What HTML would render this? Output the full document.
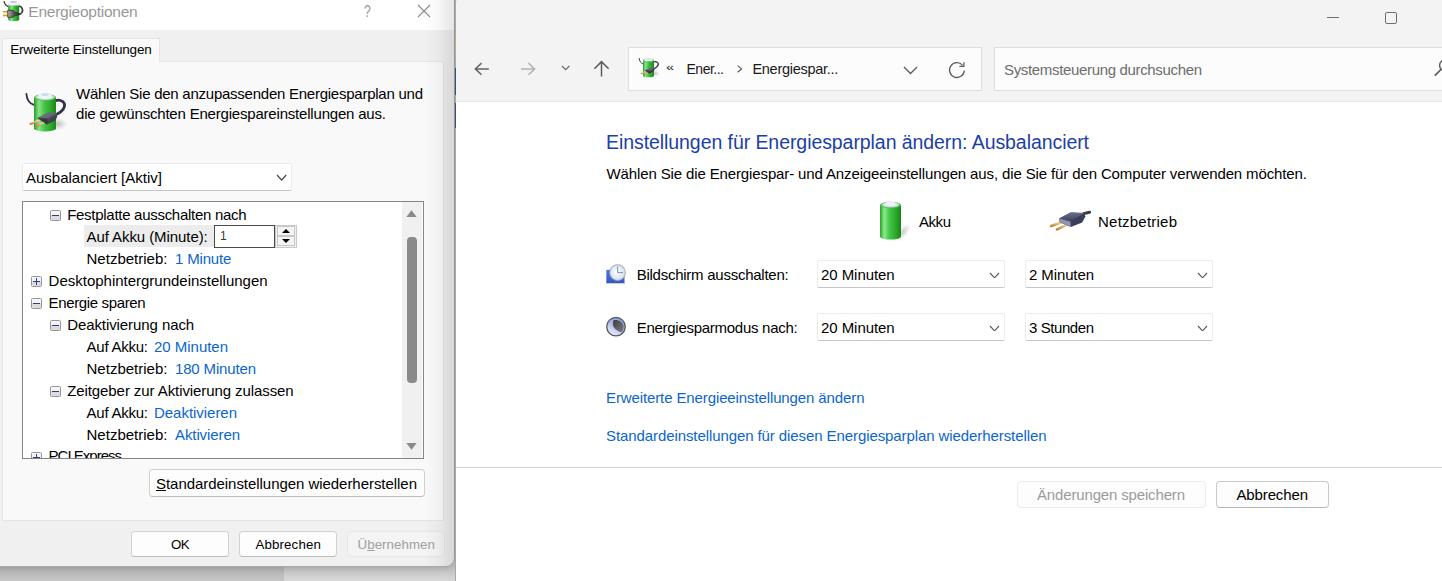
<!DOCTYPE html>
<html lang="de"><head><meta charset="utf-8"><title>Energieoptionen</title>
<style>
html,body{margin:0;padding:0}
body{width:1442px;height:581px;overflow:hidden;position:relative;background:#c9c9c9;font-family:"Liberation Sans",sans-serif}
.a{position:absolute;display:block}
.t{position:absolute;white-space:nowrap;line-height:1}
.t u{text-decoration-thickness:1px;text-underline-offset:1px}
.box{position:absolute;box-sizing:border-box}
.btn{position:absolute;box-sizing:border-box;border:1px solid #d0d0d0;border-bottom-color:#bcbcbc;border-radius:4px;background:#fdfdfd}
.sel{position:absolute;box-sizing:border-box;border:1px solid #ebebeb;border-bottom-color:#c6c6c6;border-radius:2px;background:#fff}
</style></head><body>

<div class="box" style="left:0;top:560px;width:284px;height:21px;background:#c6c6c6"></div>
<div class="box" style="left:284px;top:560px;width:172px;height:21px;background:#d8d8d8"></div>
<div class="box" style="left:0;top:560px;width:456px;height:21px;background:linear-gradient(to bottom,rgba(0,0,0,.12) 30%,rgba(0,0,0,.0))"></div>
<div class="box" style="left:455px;top:0;width:1px;height:581px;background:linear-gradient(to bottom,#a8a8a8 0,#a8a8a8 40px,#c4a588 40px,#c4a588 53px,#a8a8a8 53px,#a8a8a8 68px,#35507f 68px,#35507f 95px,#a8a8a8 95px,#a8a8a8 103px,#35507f 103px,#35507f 128px,#a8a8a8 128px,#a8a8a8 100%)"></div>
<div class="box" style="left:456px;top:0;width:10px;height:10px;background:#f1ece8"></div>
<div class="box" style="left:456px;top:0;width:986px;height:581px;background:#fff;border-top-left-radius:7px"></div>
<div class="box" style="left:456px;top:0;width:986px;height:102px;background:#f3f3f3;border-bottom:1px solid #e6e6e6;border-top-left-radius:7px"></div>
<div class="box" style="left:1327px;top:17px;width:12px;height:1px;background:#6e6e6e"></div>
<div class="box" style="left:1385px;top:12px;width:12px;height:12px;border:1px solid #6e6e6e;border-radius:2px"></div>
<svg class="a" style="left:472px;top:59px" width="20" height="20" viewBox="0 0 20 20"><path d="M16.9 9.9 H3.6 M9.5 4.1 L3.3 9.9 L9.5 15.7" fill="none" stroke="#666" stroke-width="1.5"/></svg>
<svg class="a" style="left:518px;top:59px" width="20" height="20" viewBox="0 0 20 20"><path d="M3 9.9 H16.5 M10.5 4.1 L16.7 9.9 L10.5 15.7" fill="none" stroke="#b2b2b2" stroke-width="1.5"/></svg>
<svg class="a" style="left:561px;top:65.2px" width="9.4" height="5.7" viewBox="-1 -1 9.4 5.7"><path d="M0 0 L3.7 3.7 L7.4 0" fill="none" stroke="#6a6a6a" stroke-width="1.2"/></svg>
<svg class="a" style="left:591px;top:59px" width="20" height="20" viewBox="0 0 20 20"><path d="M10.5 17.6 V3 M3.4 9.8 L10.5 2.6 L17.6 9.8" fill="none" stroke="#5c5c5c" stroke-width="1.5"/></svg>
<div class="box" style="left:628px;top:47px;width:354px;height:44px;background:#fcfcfc;border:1px solid #dedede"></div>
<svg class="a" style="left:637.5px;top:55.7px" width="22.0" height="22.0" viewBox="-2 -2 44 44">
<defs>
<linearGradient id="g1" x1="0" x2="1" y1="0" y2="0"><stop offset="0" stop-color="#2a9a2a"/><stop offset=".22" stop-color="#86e486"/><stop offset=".5" stop-color="#41c041"/><stop offset=".8" stop-color="#2aa32a"/><stop offset="1" stop-color="#1a861a"/></linearGradient>
<linearGradient id="g2" x1="0" x2="1" y1="0" y2="1"><stop offset="0" stop-color="#6c6e7e"/><stop offset="1" stop-color="#2c2c36"/></linearGradient>
<linearGradient id="g3" x1="0" x2="0" y1="0" y2="1"><stop offset="0" stop-color="#f7e3b8"/><stop offset="1" stop-color="#c08a3c"/></linearGradient>
<radialGradient id="g4" cx=".5" cy=".5" r=".5"><stop offset="0" stop-color="#ffffff"/><stop offset=".7" stop-color="#dfeef2"/><stop offset="1" stop-color="#a9d6b0"/></radialGradient>
<radialGradient id="g5" cx=".5" cy=".5" r=".5"><stop offset="0" stop-color="#000" stop-opacity=".22"/><stop offset="1" stop-color="#000" stop-opacity="0"/></radialGradient>
</defs>
<ellipse cx="32" cy="33" rx="9" ry="6" fill="url(#g5)"/>
<path d="M0.4 3 C1 9 4 13 8.4 14" fill="none" stroke="#34324e" stroke-width="1.9" stroke-linecap="round"/>
<path d="M29.5 9.6 C35 8 39.6 11.5 38.4 15.6 C37.2 19.5 33.5 22 30.2 23.6" fill="none" stroke="#34324e" stroke-width="2.8"/>
<path d="M8 6.3 L8 37.4 A11 3 0 0 0 30 37.4 L30 6.3 Z" fill="url(#g1)"/>
<ellipse cx="19" cy="6.3" rx="11" ry="3.4" fill="#5cc85c"/>
<ellipse cx="19" cy="6" rx="9.6" ry="2.9" fill="url(#g4)"/>
<ellipse cx="19" cy="4.2" rx="6.4" ry="2.3" fill="#eef4fb"/>
<ellipse cx="19" cy="3.6" rx="4" ry="1.4" fill="#c9dcef"/>
<path d="M4.6 32.9 L14.2 29" fill="none" stroke="url(#g3)" stroke-width="2.3" stroke-linecap="round"/>
<path d="M10.3 35.3 L19.6 30.8" fill="none" stroke="url(#g3)" stroke-width="2.3" stroke-linecap="round"/>
<path d="M11.5 26.7 L22.4 21.4 L30.8 22.2 L31.2 26 L29.4 29.2 L21 33.4 Z" fill="url(#g2)"/>
<path d="M11.5 26.7 L22.4 21.4 L30.8 22.2 L21.6 27.6 Z" fill="#7a7c8c" opacity=".55"/>
<path d="M11.5 26.7 L21.6 27.6 L21 33.4 L12.6 28.4 Z" fill="#24242c" opacity=".55"/>
</svg>
<span class="t" style="left:666.00px;top:58.77px;font-size:14.5px;color:#222;transform:scaleY(.8);transform-origin:0 75%;">«</span>
<span class="t" style="left:686.50px;top:62.02px;font-size:14px;color:#1a1a1a;letter-spacing:-0.495px;">Ener...</span>
<svg class="a" style="left:735px;top:63px" width="10" height="12" viewBox="0 0 10 12"><path d="M2.6 2.6 L6.6 5.9 L2.6 9.2" fill="none" stroke="#5a5a5a" stroke-width="1.2"/></svg>
<span class="t" style="left:752.40px;top:61.77px;font-size:14.5px;color:#1a1a1a;letter-spacing:-0.268px;">Energiespar...</span>
<svg class="a" style="left:903px;top:66px" width="15" height="8.5" viewBox="-1 -1 15 8.5"><path d="M0 0 L6.5 6.5 L13 0" fill="none" stroke="#5a5a5a" stroke-width="1.3"/></svg>
<svg class="a" style="left:947px;top:60px" width="20" height="20" viewBox="0 0 20 20"><path d="M17.3 10.6 A7.4 7.4 0 1 1 15.6 5.3" fill="none" stroke="#5f5f5f" stroke-width="1.3"/><path d="M16.9 2.2 V6.4 H12.4" fill="none" stroke="#5f5f5f" stroke-width="1.3"/></svg>
<div class="box" style="left:994px;top:47px;width:460px;height:44px;background:#fcfcfc;border:1px solid #dedede"></div>
<span class="t" style="left:1004.00px;top:62.02px;font-size:15px;color:#6d6d6d;letter-spacing:-0.338px;">Systemsteuerung durchsuchen</span>
<svg class="a" style="left:1430px;top:56px" width="24" height="24" viewBox="1430 56 24 24"><path d="M1434.8 75.6 L1441.6 68.8" fill="none" stroke="#5c5c5c" stroke-width="1.7"/><circle cx="1445" cy="65.4" r="5.4" fill="none" stroke="#5c5c5c" stroke-width="1.4"/></svg>
<span class="t" style="left:606.00px;top:133.27px;font-size:19.5px;color:#1c3fa6;letter-spacing:-0.069px;">Einstellungen für Energiesparplan ändern: Ausbalanciert</span>
<span class="t" style="left:606.50px;top:166.02px;font-size:15px;color:#000;letter-spacing:-0.125px;">Wählen Sie die Energiespar- und Anzeigeeinstellungen aus, die Sie für den Computer verwenden möchten.</span>
<svg class="a" style="left:878px;top:200px" width="36" height="44" viewBox="0 0 36 44">
<defs>
<linearGradient id="g6" x1="0" x2="1" y1="0" y2="0"><stop offset="0" stop-color="#27a027"/><stop offset=".2" stop-color="#8aea8a"/><stop offset=".45" stop-color="#45c545"/><stop offset=".8" stop-color="#27a327"/><stop offset="1" stop-color="#168216"/></linearGradient>
<radialGradient id="g7" cx=".5" cy=".4" r=".6"><stop offset="0" stop-color="#ffffff"/><stop offset=".6" stop-color="#e4e6f4"/><stop offset="1" stop-color="#b8c6d8"/></radialGradient>
<radialGradient id="g8" cx=".5" cy=".5" r=".5"><stop offset="0" stop-color="#000" stop-opacity=".2"/><stop offset="1" stop-color="#000" stop-opacity="0"/></radialGradient>
</defs>
<ellipse cx="25" cy="32" rx="10" ry="5" fill="url(#g8)" transform="rotate(-50 25 32)"/>
<path d="M2 5 L2 36.6 A10.5 3 0 0 0 23 36.6 L23 5 Z" fill="url(#g6)"/>
<ellipse cx="12.5" cy="5" rx="10.5" ry="3.3" fill="#4fc24f"/>
<ellipse cx="12.5" cy="4.8" rx="8.6" ry="2.7" fill="url(#g7)"/>
<ellipse cx="12.5" cy="3" rx="4.4" ry="1.8" fill="#f0f0fa"/>
</svg>
<span class="t" style="left:919.00px;top:214.02px;font-size:15px;color:#000;letter-spacing:-0.453px;">Akku</span>
<svg class="a" style="left:1046px;top:206px" width="48" height="28" viewBox="1046 206 48 28">
<defs>
<linearGradient id="g9" x1="0" x2="0" y1="0" y2="1"><stop offset="0" stop-color="#6b7090"/><stop offset="1" stop-color="#3a3d55"/></linearGradient>
<linearGradient id="g10" x1="0" x2="0" y1="0" y2="1"><stop offset="0" stop-color="#fbe9c4"/><stop offset=".5" stop-color="#e3b56a"/><stop offset="1" stop-color="#b98434"/></linearGradient>
</defs>
<path d="M1083.6 213.6 L1089.6 212.2" fill="none" stroke="#3c3c40" stroke-width="3" stroke-linecap="round"/>
<path d="M1051.2 226 L1062 221.7" fill="none" stroke="url(#g10)" stroke-width="2.6" stroke-linecap="round"/>
<path d="M1057 229.4 L1069 223.6" fill="none" stroke="url(#g10)" stroke-width="2.6" stroke-linecap="round"/>
<path d="M1059.2 218.4 L1070.6 212.4 L1084.2 213 L1085.4 216.6 L1082.2 222.4 L1070.8 227 L1059.6 222.2 Z" fill="#3b3e58"/>
<path d="M1059.2 218.4 L1070.6 212.4 L1084.2 213 L1070.5 221.6 Z" fill="url(#g9)"/>
<path d="M1059.2 218.4 L1070.5 221.6 L1070.8 227 L1059.6 222.2 Z" fill="#8e94ae"/>
</svg>
<span class="t" style="left:1098.00px;top:214.02px;font-size:15px;color:#000;letter-spacing:0.228px;">Netzbetrieb</span>
<svg class="a" style="left:604px;top:262px" width="24" height="24" viewBox="604 262 24 24">
<defs><radialGradient id="g11" cx=".45" cy=".45" r=".6"><stop offset="0" stop-color="#ffffff"/><stop offset="1" stop-color="#cfe0f0"/></radialGradient>
<linearGradient id="g12" x1="0" x2="0" y1="0" y2="1"><stop offset="0" stop-color="#5078e6"/><stop offset="1" stop-color="#3656be"/></linearGradient></defs>
<rect x="606.3" y="269.8" width="18.2" height="13.8" fill="url(#g12)"/>
<rect x="606.3" y="283" width="18.2" height="1" fill="#c4cce0"/>
<circle cx="617.6" cy="272.6" r="8.3" fill="#a9acb4"/>
<circle cx="617.6" cy="272.6" r="7.3" fill="url(#g11)"/>
<path d="M617.6 266.4 V272.6 H623" fill="none" stroke="#7f93ad" stroke-width="1"/>
</svg>
<span class="t" style="left:636.70px;top:267.02px;font-size:15px;color:#000;letter-spacing:-0.254px;">Bildschirm ausschalten:</span>
<svg class="a" style="left:604px;top:315px" width="24" height="24" viewBox="604 315 24 24">
<defs><linearGradient id="g13" x1=".8" x2=".2" y1="0" y2="1"><stop offset="0" stop-color="#7f9bdc"/><stop offset=".45" stop-color="#a9b6ea"/><stop offset="1" stop-color="#f2f3fc"/></linearGradient>
<linearGradient id="g14" x1="0" x2="1" y1="0" y2="1"><stop offset="0" stop-color="#3e3e3e"/><stop offset="1" stop-color="#7c7c7c"/></linearGradient></defs>
<circle cx="616" cy="326.7" r="9.9" fill="#55585f"/>
<circle cx="616" cy="326.7" r="8.6" fill="url(#g13)"/>
<path d="M613.8 320.1 C618 319.3 623.2 322 623.5 326.4 C623.7 329 622.8 331 621.5 332.3 C617 331.6 612.4 327.2 612.9 323.6 C613 322.2 613.3 321 613.8 320.1 Z" fill="url(#g14)"/>
</svg>
<span class="t" style="left:636.70px;top:320.02px;font-size:15px;color:#000;letter-spacing:-0.275px;">Energiesparmodus nach:</span>
<div class="sel" style="left:817px;top:260px;width:188px;height:28px"></div>
<span class="t" style="left:821.00px;top:267.02px;font-size:15px;color:#000;letter-spacing:-0.058px;">20 Minuten</span>
<svg class="a" style="left:989px;top:271.5px" width="11" height="6.8" viewBox="-1 -1 11 6.8"><path d="M0 0 L4.5 4.8 L9 0" fill="none" stroke="#555" stroke-width="1.1"/></svg>
<div class="sel" style="left:1025px;top:260px;width:188px;height:28px"></div>
<span class="t" style="left:1029.00px;top:267.02px;font-size:15px;color:#000;letter-spacing:-0.109px;">2 Minuten</span>
<svg class="a" style="left:1197px;top:271.5px" width="11" height="6.8" viewBox="-1 -1 11 6.8"><path d="M0 0 L4.5 4.8 L9 0" fill="none" stroke="#555" stroke-width="1.1"/></svg>
<div class="sel" style="left:817px;top:313px;width:188px;height:28px"></div>
<span class="t" style="left:821.00px;top:320.02px;font-size:15px;color:#000;letter-spacing:-0.058px;">20 Minuten</span>
<svg class="a" style="left:989px;top:324.5px" width="11" height="6.8" viewBox="-1 -1 11 6.8"><path d="M0 0 L4.5 4.8 L9 0" fill="none" stroke="#555" stroke-width="1.1"/></svg>
<div class="sel" style="left:1025px;top:313px;width:188px;height:28px"></div>
<span class="t" style="left:1029.00px;top:320.02px;font-size:15px;color:#000;letter-spacing:-0.426px;">3 Stunden</span>
<svg class="a" style="left:1197px;top:324.5px" width="11" height="6.8" viewBox="-1 -1 11 6.8"><path d="M0 0 L4.5 4.8 L9 0" fill="none" stroke="#555" stroke-width="1.1"/></svg>
<span class="t" style="left:606.00px;top:390.02px;font-size:15px;color:#0a66cc;letter-spacing:-0.113px;">Erweiterte Energieeinstellungen ändern</span>
<span class="t" style="left:606.00px;top:428.02px;font-size:15px;color:#0a66cc;letter-spacing:-0.088px;">Standardeinstellungen für diesen Energiesparplan wiederherstellen</span>
<div class="box" style="left:456px;top:467px;width:986px;height:1px;background:#d4d4d4"></div>
<div class="btn" style="left:1017px;top:481px;width:189px;height:27px;border-color:#ececec;background:#fdfdfd"></div>
<span class="t" style="left:1037.00px;top:487.02px;font-size:15px;color:#9b9b9b;letter-spacing:-0.155px;">Änderungen speichern</span>
<div class="btn" style="left:1216px;top:481px;width:113px;height:27px;border-color:#c9c9c9;border-bottom-color:#b5b5b5"></div>
<span class="t" style="left:1236.50px;top:487.02px;font-size:15px;color:#000;letter-spacing:-0.133px;">Abbrechen</span>
<div class="box" style="left:0;top:0;width:455px;height:581px;overflow:hidden">
<div class="box" style="left:-10px;top:-10px;width:465px;height:577px;background:#f0f0f0;border-radius:0 0 9px 9px;border:1px solid #a9a9a9;box-shadow:0 1px 6px rgba(0,0,0,.15)"></div>
<div class="box" style="left:0;top:0;width:454px;height:30px;background:#fff"></div>
<svg class="a" style="left:0px;top:0px" width="24" height="23" viewBox="0 0 24 23">
<defs>
<linearGradient id="g15" x1="0" x2="1" y1="0" y2="0"><stop offset="0" stop-color="#2a9a2a"/><stop offset=".3" stop-color="#7fe27f"/><stop offset=".6" stop-color="#3cb83c"/><stop offset="1" stop-color="#178017"/></linearGradient>
<linearGradient id="g16" x1="0" x2="1" y1="0" y2="0"><stop offset="0" stop-color="#b0b0b0"/><stop offset=".45" stop-color="#5e5e5e"/><stop offset="1" stop-color="#262626"/></linearGradient>
</defs>
<path d="M4 1.2 C4.4 4 6.4 6 8.4 6.6" fill="none" stroke="#3a3a3a" stroke-width="1.3"/>
<path d="M19 6 C22.4 6.6 23.2 10 22 12.4 C21 14 20 14.4 19 14.4" fill="none" stroke="#3a3a3a" stroke-width="1.7"/>
<path d="M8.2 3.4 L8.2 19.6 A5.5 1.6 0 0 0 19.2 19.6 L19.2 3.4 Z" fill="url(#g15)"/>
<path d="M8.2 5.6 L8.2 3 A5.5 2.2 0 0 1 19.2 3 L19.2 5.6 Z" fill="#f1f0fb"/>
<ellipse cx="13.7" cy="1.8" rx="3.4" ry=".9" fill="#bdbadf"/>
<rect x="3" y="11" width="5" height="1.7" fill="#d9a514"/>
<rect x="3" y="12.7" width="5" height="1.9" fill="#f4f4f4"/>
<rect x="3" y="14.6" width="5" height="1.7" fill="#d9a514"/>
<path d="M7.7 10.3 H13 L15.6 12.6 L19.6 13.4 V14.6 L15.6 15.4 L13 17.3 H7.7 Z" fill="url(#g16)" stroke="#222" stroke-width=".7"/>
</svg>
<span class="t" style="left:28.30px;top:3.77px;font-size:15.5px;color:#989898;letter-spacing:-0.250px;">Energieoptionen</span>
<span class="t" style="left:363.60px;top:3.02px;font-size:17px;color:#979797;transform:scaleX(.72);transform-origin:0 0;">?</span>
<svg class="a" style="left:417px;top:4px" width="14" height="14" viewBox="0 0 14 14"><path d="M1 1 L13 13 M13 1 L1 13" fill="none" stroke="#8a8a8a" stroke-width="1.1"/></svg>
<div class="box" style="left:2px;top:61px;width:442px;height:460px;background:#f9f9f9;border:1px solid #e5e5e5"></div>
<div class="box" style="left:2px;top:38px;width:158px;height:24px;background:#f9f9f9;border:1px solid #e5e5e5;border-bottom:none"></div>
<span class="t" style="left:10.20px;top:42.77px;font-size:13.5px;color:#000;letter-spacing:-0.174px;">Erweiterte Einstellungen</span>
<svg class="a" style="left:24px;top:89px" width="44" height="44" viewBox="-2 -2 44 44">
<defs>
<linearGradient id="g17" x1="0" x2="1" y1="0" y2="0"><stop offset="0" stop-color="#2a9a2a"/><stop offset=".22" stop-color="#86e486"/><stop offset=".5" stop-color="#41c041"/><stop offset=".8" stop-color="#2aa32a"/><stop offset="1" stop-color="#1a861a"/></linearGradient>
<linearGradient id="g18" x1="0" x2="1" y1="0" y2="1"><stop offset="0" stop-color="#6c6e7e"/><stop offset="1" stop-color="#2c2c36"/></linearGradient>
<linearGradient id="g19" x1="0" x2="0" y1="0" y2="1"><stop offset="0" stop-color="#f7e3b8"/><stop offset="1" stop-color="#c08a3c"/></linearGradient>
<radialGradient id="g20" cx=".5" cy=".5" r=".5"><stop offset="0" stop-color="#ffffff"/><stop offset=".7" stop-color="#dfeef2"/><stop offset="1" stop-color="#a9d6b0"/></radialGradient>
<radialGradient id="g21" cx=".5" cy=".5" r=".5"><stop offset="0" stop-color="#000" stop-opacity=".22"/><stop offset="1" stop-color="#000" stop-opacity="0"/></radialGradient>
</defs>
<ellipse cx="32" cy="33" rx="9" ry="6" fill="url(#g21)"/>
<path d="M0.4 3 C1 9 4 13 8.4 14" fill="none" stroke="#34324e" stroke-width="1.9" stroke-linecap="round"/>
<path d="M29.5 9.6 C35 8 39.6 11.5 38.4 15.6 C37.2 19.5 33.5 22 30.2 23.6" fill="none" stroke="#34324e" stroke-width="2.8"/>
<path d="M8 6.3 L8 37.4 A11 3 0 0 0 30 37.4 L30 6.3 Z" fill="url(#g17)"/>
<ellipse cx="19" cy="6.3" rx="11" ry="3.4" fill="#5cc85c"/>
<ellipse cx="19" cy="6" rx="9.6" ry="2.9" fill="url(#g20)"/>
<ellipse cx="19" cy="4.2" rx="6.4" ry="2.3" fill="#eef4fb"/>
<ellipse cx="19" cy="3.6" rx="4" ry="1.4" fill="#c9dcef"/>
<path d="M4.6 32.9 L14.2 29" fill="none" stroke="url(#g19)" stroke-width="2.3" stroke-linecap="round"/>
<path d="M10.3 35.3 L19.6 30.8" fill="none" stroke="url(#g19)" stroke-width="2.3" stroke-linecap="round"/>
<path d="M11.5 26.7 L22.4 21.4 L30.8 22.2 L31.2 26 L29.4 29.2 L21 33.4 Z" fill="url(#g18)"/>
<path d="M11.5 26.7 L22.4 21.4 L30.8 22.2 L21.6 27.6 Z" fill="#7a7c8c" opacity=".55"/>
<path d="M11.5 26.7 L21.6 27.6 L21 33.4 L12.6 28.4 Z" fill="#24242c" opacity=".55"/>
</svg>
<span class="t" style="left:76.00px;top:86.02px;font-size:15px;color:#000;letter-spacing:-0.247px;">Wählen Sie den anzupassenden Energiesparplan und</span>
<span class="t" style="left:76.00px;top:106.02px;font-size:15px;color:#000;letter-spacing:-0.195px;">die gewünschten Energiespareinstellungen aus.</span>
<div class="sel" style="left:22px;top:163px;width:270px;height:28px"></div>
<span class="t" style="left:26.00px;top:170.02px;font-size:15px;color:#000;">Ausbalanciert [Aktiv]</span>
<svg class="a" style="left:276px;top:174px" width="11.2" height="7" viewBox="-1 -1 11.2 7"><path d="M0 0 L4.6 5 L9.2 0" fill="none" stroke="#4a4a4a" stroke-width="1.2"/></svg>
<div class="box" style="left:22px;top:201px;width:402px;height:258px;background:#fff;border:1px solid #82858c;overflow:hidden">
</div>
<div class="box" style="left:402px;top:202px;width:20px;height:256px;background:#f0f0f0"></div>
<svg class="a" style="left:406px;top:210px" width="11" height="7" viewBox="0 0 11 7"><path d="M0.3 7 L5.5 0.3 L10.7 7 Z" fill="#8a8a8a"/></svg>
<svg class="a" style="left:406px;top:443px" width="11" height="7" viewBox="0 0 11 7"><path d="M0.3 0 L5.5 6.7 L10.7 0 Z" fill="#8a8a8a"/></svg>
<div class="box" style="left:407px;top:237px;width:9.5px;height:146px;background:#8a8a8a;border-radius:4px"></div>
<svg class="a" style="left:50px;top:210px" width="11" height="11" viewBox="0 0 11 11">
<rect x=".5" y=".5" width="10" height="10" rx="1" fill="#f4f4f4" stroke="#969696"/>
<rect x="1" y="5.5" width="9" height="4.5" fill="#dcdcdc"/>
<path d="M2 5.5 H9" stroke="#2a3d8f" stroke-width="1" fill="none"/>
</svg>
<span class="t" style="left:67.20px;top:207.02px;font-size:15px;color:#000;letter-spacing:-0.284px;">Festplatte ausschalten nach</span>
<div class="box" style="left:84px;top:225px;width:130px;height:22px;background:#ececec"></div>
<span class="t" style="left:86.50px;top:229.02px;font-size:15px;color:#000;letter-spacing:-0.074px;">Auf Akku (Minute):</span>
<div class="box" style="left:214px;top:224.5px;width:61px;height:23px;background:#fff;border:1px solid #4a4a4a"></div>
<span class="t" style="left:220.00px;top:230.02px;font-size:12px;color:#3a3a3a;">1</span>
<div class="box" style="left:275px;top:224.5px;width:22px;height:23px;background:#f0f0f0;border:1px solid #c8c8c8"></div>
<div class="box" style="left:277px;top:226px;width:18px;height:10px;background:#f4f4f4;border:1px solid #c8c8c8"></div>
<div class="box" style="left:277px;top:236px;width:18px;height:10px;background:#f4f4f4;border:1px solid #c8c8c8"></div>
<svg class="a" style="left:282px;top:229px" width="8" height="4" viewBox="0 0 8 4"><path d="M0 4 L4 0 L8 4 Z" fill="#000"/></svg>
<svg class="a" style="left:282px;top:239px" width="8" height="4" viewBox="0 0 8 4"><path d="M0 0 L4 4 L8 0 Z" fill="#000"/></svg>
<span class="t" style="left:86.50px;top:251.02px;font-size:15px;color:#000;letter-spacing:0.011px;">Netzbetrieb:</span>
<span class="t" style="left:175.00px;top:251.02px;font-size:15px;color:#0a66cc;letter-spacing:-0.164px;">1 Minute</span>
<svg class="a" style="left:31px;top:276px" width="11" height="11" viewBox="0 0 11 11">
<rect x=".5" y=".5" width="10" height="10" rx="1" fill="#f4f4f4" stroke="#969696"/>
<rect x="1" y="5.5" width="9" height="4.5" fill="#dcdcdc"/>
<path d="M2 5.5 H9" stroke="#2a3d8f" stroke-width="1" fill="none"/><path d="M5.5 2 V9" stroke="#2a3d8f" stroke-width="1" fill="none"/>
</svg>
<span class="t" style="left:48.60px;top:273.02px;font-size:15px;color:#000;letter-spacing:-0.011px;">Desktophintergrundeinstellungen</span>
<svg class="a" style="left:31px;top:298px" width="11" height="11" viewBox="0 0 11 11">
<rect x=".5" y=".5" width="10" height="10" rx="1" fill="#f4f4f4" stroke="#969696"/>
<rect x="1" y="5.5" width="9" height="4.5" fill="#dcdcdc"/>
<path d="M2 5.5 H9" stroke="#2a3d8f" stroke-width="1" fill="none"/>
</svg>
<span class="t" style="left:48.60px;top:295.02px;font-size:15px;color:#000;letter-spacing:-0.364px;">Energie sparen</span>
<svg class="a" style="left:50px;top:320px" width="11" height="11" viewBox="0 0 11 11">
<rect x=".5" y=".5" width="10" height="10" rx="1" fill="#f4f4f4" stroke="#969696"/>
<rect x="1" y="5.5" width="9" height="4.5" fill="#dcdcdc"/>
<path d="M2 5.5 H9" stroke="#2a3d8f" stroke-width="1" fill="none"/>
</svg>
<span class="t" style="left:67.20px;top:317.02px;font-size:15px;color:#000;letter-spacing:-0.084px;">Deaktivierung nach</span>
<span class="t" style="left:86.50px;top:339.02px;font-size:15px;color:#000;letter-spacing:-0.234px;">Auf Akku:</span>
<span class="t" style="left:154.00px;top:339.02px;font-size:15px;color:#0a66cc;letter-spacing:-0.024px;">20 Minuten</span>
<span class="t" style="left:86.50px;top:361.02px;font-size:15px;color:#000;letter-spacing:0.011px;">Netzbetrieb:</span>
<span class="t" style="left:175.00px;top:361.02px;font-size:15px;color:#0a66cc;letter-spacing:-0.156px;">180 Minuten</span>
<svg class="a" style="left:50px;top:386px" width="11" height="11" viewBox="0 0 11 11">
<rect x=".5" y=".5" width="10" height="10" rx="1" fill="#f4f4f4" stroke="#969696"/>
<rect x="1" y="5.5" width="9" height="4.5" fill="#dcdcdc"/>
<path d="M2 5.5 H9" stroke="#2a3d8f" stroke-width="1" fill="none"/>
</svg>
<span class="t" style="left:67.20px;top:383.02px;font-size:15px;color:#000;letter-spacing:-0.085px;">Zeitgeber zur Aktivierung zulassen</span>
<span class="t" style="left:86.50px;top:405.02px;font-size:15px;color:#000;letter-spacing:-0.234px;">Auf Akku:</span>
<span class="t" style="left:154.00px;top:405.02px;font-size:15px;color:#0a66cc;letter-spacing:-0.034px;">Deaktivieren</span>
<span class="t" style="left:86.50px;top:427.02px;font-size:15px;color:#000;letter-spacing:0.011px;">Netzbetrieb:</span>
<span class="t" style="left:175.00px;top:427.02px;font-size:15px;color:#0a66cc;letter-spacing:-0.095px;">Aktivieren</span>
<div class="box" style="left:23px;top:447px;width:380px;height:11px;overflow:hidden">
<svg class="a" style="left:8px;top:5px" width="11" height="11" viewBox="0 0 11 11">
<rect x=".5" y=".5" width="10" height="10" rx="1" fill="#f4f4f4" stroke="#969696"/>
<rect x="1" y="5.5" width="9" height="4.5" fill="#dcdcdc"/>
<path d="M2 5.5 H9" stroke="#2a3d8f" stroke-width="1" fill="none"/><path d="M5.5 2 V9" stroke="#2a3d8f" stroke-width="1" fill="none"/>
</svg>
<span class="t" style="left:25.60px;top:1.42px;font-size:15px;color:#000;letter-spacing:-0.986px;">PCI Express</span>
</div>
<div class="btn" style="left:149px;top:469px;width:276px;height:28px"></div>
<span class="t" style="left:156.00px;top:476.02px;font-size:15px;color:#000;letter-spacing:-0.046px;"><u>S</u>tandardeinstellungen wiederherstellen</span>
<div class="btn" style="left:131px;top:531px;width:98px;height:26px"></div>
<span class="t" style="left:171.00px;top:537.87px;font-size:13.3px;color:#000;letter-spacing:-0.619px;">OK</span>
<div class="btn" style="left:239px;top:531px;width:98px;height:26px"></div>
<span class="t" style="left:255.40px;top:537.87px;font-size:13.3px;color:#000;letter-spacing:0.146px;">Abbrechen</span>
<div class="btn" style="left:347px;top:531px;width:98px;height:26px;border-color:#e6e6e6;background:#f4f4f4"></div>
<span class="t" style="left:357.50px;top:537.87px;font-size:13.3px;color:#a0a0a0;letter-spacing:0.057px;">Ü<u>b</u>ernehmen</span>
<div class="box" style="left:425px;top:0;width:30px;height:566px;border-radius:0 0 9px 0;background:linear-gradient(to right,rgba(0,0,0,0),rgba(0,0,0,.03) 45%,rgba(0,0,0,.11))"></div>
</div>
</body></html>
